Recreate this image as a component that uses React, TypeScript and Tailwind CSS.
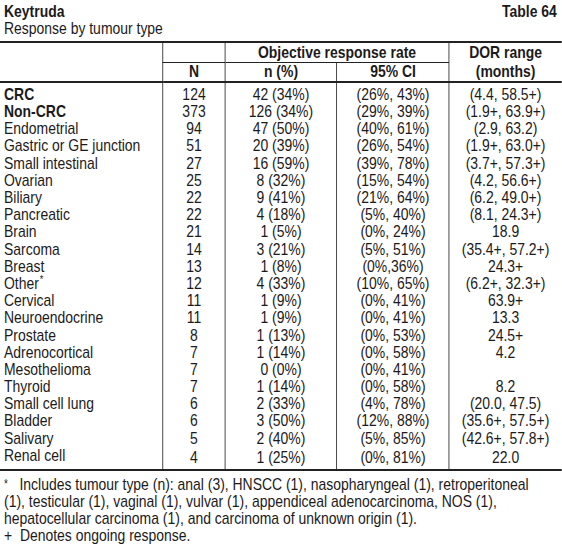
const rows = [
    { name: "CRC", n: "124", pct: "42 (34%)", ci: "(26%, 43%)", dor: "(4.4, 58.5+)", bold: true },
    { name: "Non-CRC", n: "373", pct: "126 (34%)", ci: "(29%, 39%)", dor: "(1.9+, 63.9+)", bold: true },
    { name: "Endometrial", n: "94", pct: "47 (50%)", ci: "(40%, 61%)", dor: "(2.9, 63.2)" },
    { name: "Gastric or GE junction", n: "51", pct: "20 (39%)", ci: "(26%, 54%)", dor: "(1.9+, 63.0+)" },
    { name: "Small intestinal", n: "27", pct: "16 (59%)", ci: "(39%, 78%)", dor: "(3.7+, 57.3+)" },
    { name: "Ovarian", n: "25", pct: "8 (32%)", ci: "(15%, 54%)", dor: "(4.2, 56.6+)" },
    { name: "Biliary", n: "22", pct: "9 (41%)", ci: "(21%, 64%)", dor: "(6.2, 49.0+)" },
    { name: "Pancreatic", n: "22", pct: "4 (18%)", ci: "(5%, 40%)", dor: "(8.1, 24.3+)" },
    { name: "Brain", n: "21", pct: "1 (5%)", ci: "(0%, 24%)", dor: "18.9" },
    { name: "Sarcoma", n: "14", pct: "3 (21%)", ci: "(5%, 51%)", dor: "(35.4+, 57.2+)" },
    { name: "Breast", n: "13", pct: "1 (8%)", ci: "(0%,36%)", dor: "24.3+" },
    { name: "Other", n: "12", pct: "4 (33%)", ci: "(10%, 65%)", dor: "(6.2+, 32.3+)", star: true },
    { name: "Cervical", n: "11", pct: "1 (9%)", ci: "(0%, 41%)", dor: "63.9+" },
    { name: "Neuroendocrine", n: "11", pct: "1 (9%)", ci: "(0%, 41%)", dor: "13.3" },
    { name: "Prostate", n: "8", pct: "1 (13%)", ci: "(0%, 53%)", dor: "24.5+" },
    { name: "Adrenocortical", n: "7", pct: "1 (14%)", ci: "(0%, 58%)", dor: "4.2" },
    { name: "Mesothelioma", n: "7", pct: "0 (0%)", ci: "(0%, 41%)", dor: "" },
    { name: "Thyroid", n: "7", pct: "1 (14%)", ci: "(0%, 58%)", dor: "8.2" },
    { name: "Small cell lung", n: "6", pct: "2 (33%)", ci: "(4%, 78%)", dor: "(20.0, 47.5)" },
    { name: "Bladder", n: "6", pct: "3 (50%)", ci: "(12%, 88%)", dor: "(35.6+, 57.5+)" },
    { name: "Salivary", n: "5", pct: "2 (40%)", ci: "(5%, 85%)", dor: "(42.6+, 57.8+)" },
    { name: "Renal cell", n: "4", pct: "1 (25%)", ci: "(0%, 81%)", dor: "22.0" },
]

// the source uses a condensed face; Liberation Sans squeezed horizontally stands in for it
const App = () => {
    return (
        <div className="w-[562px] overflow-hidden bg-white">
            <div className="w-[685px] origin-top-left scale-x-[0.82] text-[#1c1a1b] font-['Liberation_Sans',Arial,sans-serif] text-[17px] leading-[17px]">
                <div className="flex justify-between items-start px-[4.9px] pt-[3px]">
                    <div>
                        <h1 className="font-bold">Keytruda</h1>
                        <p>Response by tumour type</p>
                    </div>
                    <span className="font-bold pr-[1px]">Table 64</span>
                </div>

                <table className="mt-[4px] w-full table-fixed border-collapse">
                    <colgroup>
                        <col className="w-[198.8px]" />
                        <col className="w-[75.6px]" />
                        <col className="w-[136.6px]" />
                        <col className="w-[136.6px]" />
                        <col />
                    </colgroup>
                    <thead>
                        <tr className="border-t-2 border-[#222] h-[20px]">
                            <th rowSpan={2} className="border-b-2 border-[#222]"></th>
                            <th className="border-l-[1.5px] border-b-[1.5px] border-[#222]"></th>
                            <th colSpan={2} className="border-l-[1.5px] border-b-[1.5px] border-[#222] font-bold">Objective response rate</th>
                            <th className="border-l-[1.5px] border-[#222] font-bold">DOR range</th>
                        </tr>
                        <tr className="h-[20px] border-b-2 border-[#222]">
                            <th className="border-l-[1.5px] border-[#222] font-bold">N</th>
                            <th className="border-l-[1.5px] border-[#222] font-bold">n (%)</th>
                            <th className="border-l-[1.5px] border-[#222] font-bold">95% CI</th>
                            <th className="border-l-[1.5px] border-[#222] font-bold">(months)</th>
                        </tr>
                    </thead>
                    <tbody className="border-b-2 border-[#222]">
                        {rows.map((r, i) => (
                            <tr key={i} className="h-[17.2px]">
                                <td className={`pl-[4.9px] whitespace-nowrap ${r.bold ? "font-bold" : ""} ${i === 0 ? "pt-[3px]" : ""} ${i === rows.length - 1 ? "pb-[5px]" : ""}`}>
                                    {r.name}
                                    {r.star && <sup className="text-[11px] ml-[1px]">*</sup>}
                                </td>
                                <td className={`border-l-[1.5px] border-[#222] text-center ${i === 0 ? "pt-[3px]" : ""}`}>{r.n}</td>
                                <td className={`border-l-[1.5px] border-[#222] text-center ${i === 0 ? "pt-[3px]" : ""}`}>{r.pct}</td>
                                <td className={`border-l-[1.5px] border-[#222] text-center ${i === 0 ? "pt-[3px]" : ""}`}>{r.ci}</td>
                                <td className={`border-l-[1.5px] border-[#222] text-center ${i === 0 ? "pt-[3px]" : ""}`}>{r.dor}</td>
                            </tr>
                        ))}
                    </tbody>
                </table>

                <div className="px-[4.9px] pt-[5px] pb-[12px] whitespace-nowrap">
                    <p><span className="text-[12px] align-top">*</span>&nbsp;&nbsp; Includes tumour type (n): anal (3), HNSCC (1), nasopharyngeal (1), retroperitoneal</p>
                    <p>(1), testicular (1), vaginal (1), vulvar (1), appendiceal adenocarcinoma, NOS (1),</p>
                    <p>hepatocellular carcinoma (1), and carcinoma of unknown origin (1).</p>
                    <p>+&nbsp; Denotes ongoing response.</p>
                </div>
            </div>
        </div>
    )
}

export default App
